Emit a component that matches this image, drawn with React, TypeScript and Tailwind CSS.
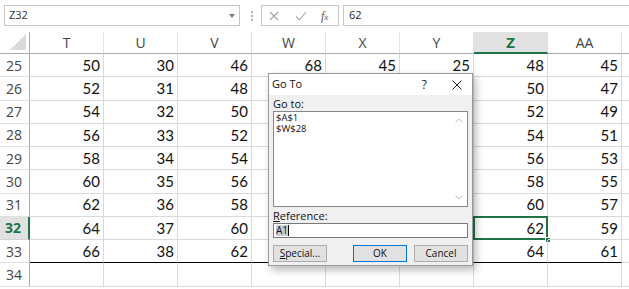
import React from "react";

const cols = ["T", "U", "V", "W", "X", "Y", "Z", "AA"];
const base = [50, 30, 46, 68, 45, 25, 48, 45];
const step = [2, 1, 2, 2, 1, 1, 2, 2];
const rows = [25, 26, 27, 28, 29, 30, 31, 32, 33, 34];
// W, X, Y sit under the dialog below row 25
const hidden = ["W", "X", "Y"];

const ui = { fontFamily: '"Open Sans", "Noto Sans", sans-serif' };
const num = { fontFamily: 'Lato, "Liberation Sans", sans-serif' };

function FormulaBar() {
  return (
    <div className="flex h-[32px] items-start pt-[5px] bg-white" style={ui}>
      <div className="ml-[4px] flex h-[21px] w-[236px] items-center justify-between border border-[#c6c6c6] pl-[4px] pr-[4px] text-[11px] text-[#333]">
        <span>Z32</span>
        <span className="h-0 w-0 border-x-[3px] border-t-[4px] border-x-transparent border-t-[#7a7a7a]" />
      </div>
      <div className="ml-[11px] flex h-[21px] flex-col justify-center gap-[2px]">
        <span className="h-[2px] w-[2px] bg-[#b0b0b0]" />
        <span className="h-[2px] w-[2px] bg-[#b0b0b0]" />
        <span className="h-[2px] w-[2px] bg-[#b0b0b0]" />
      </div>
      <div className="ml-[8px] flex h-[21px] w-[78px] items-center border border-[#c6c6c6]">
        <svg width="10" height="10" viewBox="0 0 10 10" className="ml-[7px]">
          <path d="M1 1 L9 9 M9 1 L1 9" stroke="#a6a6a6" strokeWidth="1.1" />
        </svg>
        <svg width="12" height="10" viewBox="0 0 12 10" className="ml-[16px]">
          <path d="M1 5.5 L4.5 9 L11 1" stroke="#a6a6a6" strokeWidth="1.1" fill="none" />
        </svg>
        <span
          className="ml-[14px] text-[12px] italic text-[#555]"
          style={{ fontFamily: '"Liberation Serif", serif' }}
        >
          f<span className="text-[9px]">x</span>
        </span>
      </div>
      <div className="ml-[4px] flex h-[21px] flex-1 items-center border border-r-0 border-[#c6c6c6] pl-[5px] text-[11px] text-[#222]">
        62
      </div>
    </div>
  );
}

function Grid() {
  return (
    <div className="grid grid-cols-[30px_repeat(8,74px)_1fr] bg-white">
      <div className="relative h-[22px] border-b border-r border-[#ababab]">
        <svg className="absolute bottom-[3px] right-[3px]" width="16" height="16" viewBox="0 0 16 16">
          <path d="M16 0 L16 16 L0 16 Z" fill="#dadada" />
        </svg>
      </div>
      {cols.map((c) =>
        c === "Z" ? (
          <div
            key={c}
            className="flex h-[22px] items-center justify-center border-b-2 border-r border-b-[#217346] border-r-[#e1e1e1] bg-[#e1e1e1] text-[15px] font-bold text-[#217346]"
            style={ui}
          >
            {c}
          </div>
        ) : (
          <div
            key={c}
            className="flex h-[22px] items-center justify-center border-b border-r border-b-[#ababab] border-r-[#e1e1e1] text-[14px] text-[#444]"
            style={ui}
          >
            {c}
          </div>
        )
      )}
      <div className="h-[22px] border-b border-[#ababab]" />

      {rows.map((r) => {
        const k = r - 25;
        const sel = r === 32;
        const last = r === 33;
        return (
          <React.Fragment key={r}>
            <div
              className={
                sel
                  ? "flex h-[23.25px] items-center border-b border-r-2 border-b-[#d4d4d4] border-r-[#217346] bg-[#e1e1e1] pl-[5px] text-[14px] font-bold text-[#217346]"
                  : "flex h-[23.25px] items-center border-b border-r border-b-[#e1e1e1] border-r-[#ababab] pl-[6px] text-[14px] text-[#444]"
              }
              style={ui}
            >
              {r}
            </div>
            {cols.map((c, i) => {
              const show = r < 34 && !(r > 25 && hidden.includes(c));
              return (
                <div
                  key={c}
                  className={
                    "relative flex h-[23.25px] items-center justify-end border-r border-r-[#dadada] pr-[3px] text-[15px] text-[#111] " +
                    (last ? "border-b border-b-black" : "border-b border-b-[#dadada]")
                  }
                  style={num}
                >
                  {show ? base[i] + step[i] * k : ""}
                  {sel && c === "Z" && (
                    <>
                      <span className="pointer-events-none absolute inset-[-1px] border-2 border-[#217346]" />
                      <span className="absolute bottom-[-4px] right-[-4px] h-[6px] w-[6px] border border-white bg-[#217346]" />
                    </>
                  )}
                </div>
              );
            })}
            <div className="h-[23.25px] border-b border-b-[#dadada]" />
          </React.Fragment>
        );
      })}
    </div>
  );
}

function GoToDialog() {
  return (
    <div
      className="absolute left-[268px] top-[73px] flex h-[193px] w-[205px] flex-col border border-[#9a9a9a] bg-[#f0f0f0] shadow-[3px_4px_8px_rgba(0,0,0,0.28)]"
      style={ui}
    >
      <div className="flex h-[21px] items-center bg-white pl-[3px] text-[11px] text-[#111]">
        <span>Go To</span>
        <span className="ml-auto text-[12px] text-[#222]">?</span>
        <svg width="10" height="10" viewBox="0 0 10 10" className="ml-[25px] mr-[10px]">
          <path d="M0.5 0.5 L9.5 9.5 M9.5 0.5 L0.5 9.5" stroke="#222" strokeWidth="1" />
        </svg>
      </div>
      <div className="flex flex-1 flex-col px-[4px] pt-[2px]">
        <div className="text-[11px] leading-[13px] text-[#111]">Go to:</div>
        <div className="mt-[1px] flex h-[96px] border border-[#828790] bg-white">
          <div className="flex-1 whitespace-pre-line pl-[2px] pt-[1px] text-[9.5px] leading-[10.5px] text-[#111]">
            {"$A$1\n$W$28"}
          </div>
          <div className="flex w-[16px] flex-col items-center justify-between bg-white py-[6px]">
            <svg width="8" height="5" viewBox="0 0 8 5">
              <path d="M0.5 4.5 L4 1 L7.5 4.5" stroke="#c2c2c2" fill="none" />
            </svg>
            <svg width="8" height="5" viewBox="0 0 8 5">
              <path d="M0.5 0.5 L4 4 L7.5 0.5" stroke="#c2c2c2" fill="none" />
            </svg>
          </div>
        </div>
        <div className="mt-[3px] text-[11px] leading-[12px] text-[#111]">
          <span className="underline">R</span>eference:
        </div>
        <div className="mt-[1px] flex h-[15px] items-center border border-[#7a7a7a] bg-white pl-[2px] text-[10px] text-[#111]">
          <span className="bg-[#c8ccd6] leading-[11px]">A1</span>
          <span className="h-[11px] w-px bg-black" />
        </div>
        <div className="mt-[7px] flex items-center text-[10px] text-[#111]">
          <div className="flex h-[17px] w-[54px] items-center justify-center border border-[#adadad] bg-[#e1e1e1]">
            <span>
              <span className="underline">S</span>pecial...
            </span>
          </div>
          <div className="ml-[26px] flex h-[17px] w-[54px] items-center justify-center border border-[#0078d7] bg-[#e1e1e1]">
            OK
          </div>
          <div className="ml-[7px] flex h-[17px] w-[54px] items-center justify-center border border-[#adadad] bg-[#e1e1e1]">
            Cancel
          </div>
        </div>
      </div>
    </div>
  );
}

export default function App() {
  return (
    <div className="relative h-[289px] w-[629px] overflow-hidden bg-white">
      <FormulaBar />
      <Grid />
      <GoToDialog />
    </div>
  );
}
